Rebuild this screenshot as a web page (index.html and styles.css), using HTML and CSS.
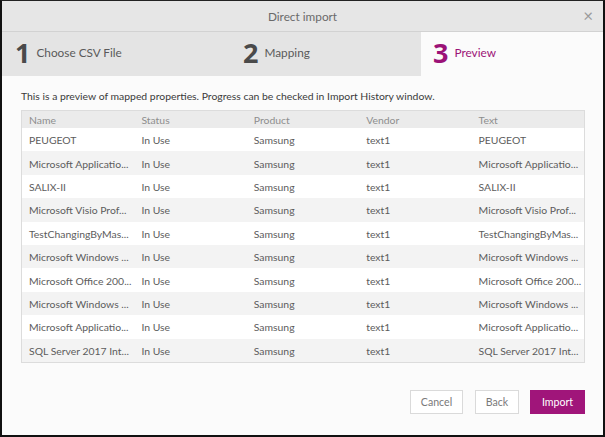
FILE: index.html
```html
<!DOCTYPE html>
<html lang="en">
  <head>
    <meta charset="UTF-8" />
    <meta name="viewport" content="width=device-width, initial-scale=1.0" />
    <title>Direct import</title>
    <link rel="stylesheet" href="styles.css">
  </head>
  <body>
    <div class="dialog">
      <div class="titlebar">
        <span class="title">Direct import</span>
        <span class="close">&times;</span>
      </div>

      <div class="steps">
        <div class="step step-1"><span class="num">1</span><span class="label">Choose CSV File</span></div>
        <div class="step step-2"><span class="num">2</span><span class="label">Mapping</span></div>
        <div class="step step-3 active"><span class="num">3</span><span class="label">Preview</span></div>
      </div>

      <div class="content">
        <p class="hint">This is a preview of mapped properties. Progress can be checked in Import History window.</p>

        <div class="grid">
          <div class="row head">
            <span>Name</span><span>Status</span><span>Product</span><span>Vendor</span><span>Text</span>
          </div>
          <div class="row">
            <span>PEUGEOT</span><span>In Use</span><span>Samsung</span><span>text1</span><span>PEUGEOT</span>
          </div>
          <div class="row">
            <span>Microsoft Applicatio...</span><span>In Use</span><span>Samsung</span><span>text1</span><span>Microsoft Applicatio...</span>
          </div>
          <div class="row">
            <span>SALIX-II</span><span>In Use</span><span>Samsung</span><span>text1</span><span>SALIX-II</span>
          </div>
          <div class="row">
            <span>Microsoft Visio Prof...</span><span>In Use</span><span>Samsung</span><span>text1</span><span>Microsoft Visio Prof...</span>
          </div>
          <div class="row">
            <span>TestChangingByMas...</span><span>In Use</span><span>Samsung</span><span>text1</span><span>TestChangingByMas...</span>
          </div>
          <div class="row">
            <span>Microsoft Windows ...</span><span>In Use</span><span>Samsung</span><span>text1</span><span>Microsoft Windows ...</span>
          </div>
          <div class="row">
            <span>Microsoft Office 200...</span><span>In Use</span><span>Samsung</span><span>text1</span><span>Microsoft Office 200...</span>
          </div>
          <div class="row">
            <span>Microsoft Windows ...</span><span>In Use</span><span>Samsung</span><span>text1</span><span>Microsoft Windows ...</span>
          </div>
          <div class="row">
            <span>Microsoft Applicatio...</span><span>In Use</span><span>Samsung</span><span>text1</span><span>Microsoft Applicatio...</span>
          </div>
          <div class="row">
            <span>SQL Server 2017 Int...</span><span>In Use</span><span>Samsung</span><span>text1</span><span>SQL Server 2017 Int...</span>
          </div>
        </div>

        <div class="buttons">
          <button class="btn cancel">Cancel</button>
          <button class="btn back">Back</button>
          <button class="btn primary">Import</button>
        </div>
      </div>
    </div>
  </body>
</html>
```

FILE: styles.css
```css
html,
body {
  margin: 0;
  padding: 0;
  background: #111;
}
body {
  font-family: Lato, "Open Sans", sans-serif;
  color: #444;
}
.dialog {
  width: 601px;
  height: 434px;
  border-top: 1px solid #222;
  border-left: 2px solid #111;
  border-right: 2px solid #111;
  border-bottom: 2px solid #111;
  background: #fbfbfb;
  display: flex;
  flex-direction: column;
}
.titlebar {
  height: 30px;
  background: #e6e6e6;
  border-bottom: 1px solid #d2d2d2;
  display: flex;
  align-items: center;
  justify-content: center;
  position: relative;
}
.title {
  font-size: 11.8px;
  color: #6a6a6a;
}
.close {
  position: absolute;
  right: 10px;
  top: 6px;
  font-size: 17px;
  line-height: 17px;
  color: #9a9a9a;
}
.steps {
  display: flex;
  height: 44px;
  background: #e4e4e4;
}
.step {
  display: flex;
  align-items: center;
  padding-left: 12px;
  padding-bottom: 4px;
  box-sizing: border-box;
}
.step-1 {
  width: 229px;
  padding-left: 13px;
}
.step-2 {
  width: 190px;
}
.step-3 {
  flex: 1;
}
.step.active {
  background: #fbfbfb;
}
.num {
  font-family: "Open Sans", sans-serif;
  font-size: 27px;
  font-weight: 700;
  color: #4a4a4a;
  margin-right: 6px;
  line-height: 1;
}
.label {
  font-size: 11.8px;
  color: #5a5a5a;
  margin-top: 1px;
}
.active .num,
.active .label {
  color: #9b1277;
}
.content {
  padding: 12px 18px 0 19px;
  display: flex;
  flex-direction: column;
}
.hint {
  margin: 0 0 6px 0;
  font-size: 10.4px;
  line-height: 16px;
  color: #3a3a3a;
}
.grid {
  border: 1px solid #dcdcdc;
  background: #fff;
}
.row {
  display: grid;
  grid-template-columns: repeat(5, 1fr);
  height: 23.4px;
  align-items: center;
  font-size: 10.4px;
  color: #5c5c5c;
}
.row span {
  padding-left: 7px;
  padding-top: 1px;
  white-space: nowrap;
  overflow: hidden;
}
.row:nth-child(odd) {
  background: #f3f3f3;
}
.row.head {
  height: 17px;
  background: #ebebeb;
  color: #8e8e8e;
}
.buttons {
  display: flex;
  justify-content: flex-end;
  gap: 12px;
  margin-top: 27px;
}
.btn {
  height: 24px;
  padding: 0;
  font-family: inherit;
  font-size: 10.6px;
  color: #7a7a7a;
  background: #fff;
  border: 1px solid #dadada;
}
.cancel {
  width: 53px;
}
.back {
  width: 44px;
  margin-right: -1px;
}
.btn.primary {
  width: 55px;
  background: #a0157a;
  border-color: #a0157a;
  color: #fff;
}
```
